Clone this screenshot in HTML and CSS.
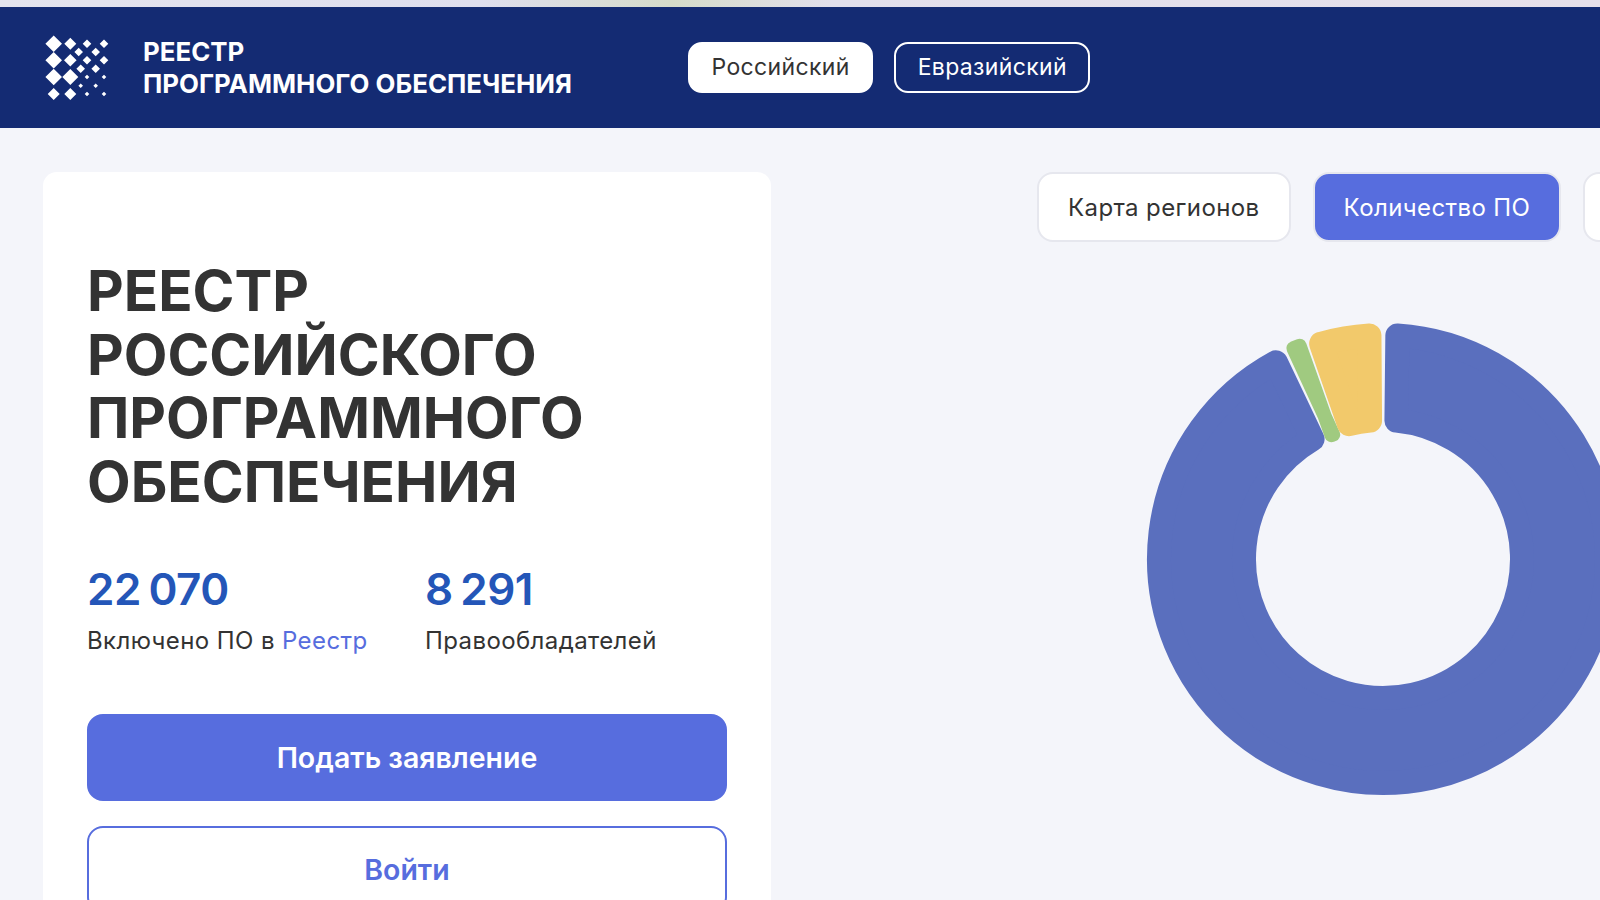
FILE: index.html
```html
<!DOCTYPE html>
<html lang="ru">
<head>
  <meta charset="UTF-8">
  <meta name="viewport" content="width=device-width, initial-scale=1">
  <title>Реестр программного обеспечения</title>
  <link rel="stylesheet" href="styles.css">
</head>
<body>
  <div class="top-strip"></div>
  <header class="site-header">
    <div class="brand">
      <svg class="brand-logo" width="72" height="66" viewBox="44 35 72 66" fill="#fff">
        <path d="M53.7 35.4l8.3 8.3-8.3 8.3-8.3-8.3zM53.7 52l8.3 8.3-8.3 8.3-8.3-8.3zM53.7 68.7l8.3 8.3-8.3 8.3-8.3-8.3zM53.7 88l6 6-6 6-6-6z"/>
        <path d="M70.3 37.7l6 6-6 6-6-6zM70.3 54l6.3 6.3-6.3 6.3-6.3-6.3zM70.3 69l8 8-8 8-8-8zM70.3 88l6 6-6 6-6-6z"/>
        <path d="M87 39.4l4.3 4.3-4.3 4.3-4.3-4.3zM104 39.4l4.3 4.3-4.3 4.3-4.3-4.3zM78.7 47.7l4.3 4.3-4.3 4.3-4.3-4.3zM95.7 47.7l4.3 4.3-4.3 4.3-4.3-4.3z"/>
        <path d="M87 56l4.3 4.3-4.3 4.3-4.3-4.3zM104 56l4.3 4.3-4.3 4.3-4.3-4.3zM80.7 64.4l4.3 4.3-4.3 4.3-4.3-4.3zM95.7 64.4l4.3 4.3-4.3 4.3-4.3-4.3z"/>
        <path d="M87 74.7l2.3 2.3-2.3 2.3-2.3-2.3zM104 74.7l2.3 2.3-2.3 2.3-2.3-2.3zM80.7 83.4l2.3 2.3-2.3 2.3-2.3-2.3zM95.7 83.4l2.3 2.3-2.3 2.3-2.3-2.3zM87 91.7l2.3 2.3-2.3 2.3-2.3-2.3zM104 91.7l2.3 2.3-2.3 2.3-2.3-2.3z"/>
      </svg>
      <div class="brand-name">РЕЕСТР<br>ПРОГРАММНОГО ОБЕСПЕЧЕНИЯ</div>
    </div>
    <nav class="registry-switch">
      <a class="pill pill-active">Российский</a>
      <a class="pill">Евразийский</a>
    </nav>
  </header>

  <main class="main-container">
    <section class="intro-card">
      <h1>РЕЕСТР РОССИЙСКОГО ПРОГРАММНОГО ОБЕСПЕЧЕНИЯ</h1>
      <div class="stats">
        <div class="stat stat-software">
          <div class="stat-number">22 070</div>
          <div class="stat-label">Включено ПО в <a>Реестр</a></div>
        </div>
        <div class="stat">
          <div class="stat-number">8 291</div>
          <div class="stat-label">Правообладателей</div>
        </div>
      </div>
      <button class="btn btn-primary">Подать заявление</button>
      <button class="btn btn-outline">Войти</button>
    </section>

    <section class="chart-section">
      <div class="chart-tabs">
        <button class="tab">Карта регионов</button>
        <button class="tab tab-active">Количество ПО</button>
        <button class="tab tab-extra"></button>
      </div>
      <svg class="donut" id="donut" width="474" height="474" viewBox="-237 -237 474 474"></svg>
    </section>
  </main>

  <script>
    // angles are degrees clockwise from 12 o'clock
    const slices = [
      { from: 0.6, to: 334.5, color: '#5a6fbe', corner: 12 },
      { from: 335.2, to: 340.4, color: '#a0ca80', corner: 7 },
      { from: 340.9, to: 359.6, color: '#f2c96b', corner: 12 }
    ];
    const outerR = 236;
    const innerR = 127;

    function point(r, deg) {
      const rad = deg * Math.PI / 180;
      return (r * Math.sin(rad)).toFixed(2) + ' ' + (-r * Math.cos(rad)).toFixed(2);
    }

    function slicePath(s) {
      const R = outerR - s.corner;
      const r = innerR + s.corner;
      const outerInset = s.corner / R * 180 / Math.PI;
      const innerInset = s.corner / r * 180 / Math.PI;
      const large = s.to - s.from > 180 ? 1 : 0;
      return 'M' + point(R, s.from + outerInset) +
        'A' + R + ' ' + R + ' 0 ' + large + ' 1 ' + point(R, s.to - outerInset) +
        'L' + point(r, s.to - innerInset) +
        'A' + r + ' ' + r + ' 0 ' + large + ' 0 ' + point(r, s.from + innerInset) + 'Z';
    }

    document.getElementById('donut').innerHTML = slices.map(function(s) {
      return '<path d="' + slicePath(s) + '" fill="' + s.color + '" stroke="' + s.color +
        '" stroke-width="' + s.corner * 2 + '" stroke-linejoin="round"/>';
    }).join('');
  </script>
</body>
</html>
```

FILE: styles.css
```css
* {
  box-sizing: border-box;
}
html, body {
  height: 100%;
}
body {
  margin: 0;
  overflow: hidden;
  background: #f4f5fa;
  color: #333;
  font-family: Inter, "Noto Sans", sans-serif;
}
.top-strip {
  height: 7px;
  background: linear-gradient(90deg, #e4e4ee 0%, #dfdfee 30%, #d6dcca 42%, #e2e0ec 52%, #e6e0ea 100%);
}
.site-header {
  display: flex;
  align-items: center;
  height: 121px;
  padding: 0 0 0 44px;
  background: #142b73;
  color: #fff;
}
.brand {
  display: flex;
  align-items: center;
  gap: 27px;
  width: 644px;
}
.brand-logo {
  flex: none;
}
.brand-name {
  font-size: 25.85px;
  font-weight: 700;
  line-height: 32px;
  white-space: nowrap;
}
.registry-switch {
  display: flex;
  gap: 21px;
}
.pill {
  height: 51px;
  padding: 0 21.5px;
  border: 2px solid #fff;
  border-radius: 14px;
  font-size: 23px;
  letter-spacing: 0.35px;
  line-height: 47px;
}
.pill-active {
  background: #fff;
  color: #333;
}
.main-container {
  display: flex;
  padding: 44px 0 0 43px;
}
.intro-card {
  flex: none;
  width: 728px;
  padding: 87px 44px 0;
  border-radius: 14px;
  background: #fff;
}
h1 {
  margin: 0 0 47px;
  font-size: 56.7px;
  font-weight: 700;
  line-height: 63.7px;
  letter-spacing: 0;
}
.stats {
  display: flex;
  margin-bottom: 57px;
}
.stat-software {
  width: 338px;
}
.stat-number {
  color: #2456b8;
  font-size: 44px;
  font-weight: 600;
  line-height: 56px;
  letter-spacing: -0.5px;
  word-spacing: -3px;
}
.stat-label {
  margin-top: 8px;
  font-size: 24px;
  letter-spacing: 0.4px;
  line-height: 32px;
}
.stat-label a {
  color: #576dde;
}
.btn {
  display: block;
  width: 100%;
  height: 87px;
  margin-bottom: 25px;
  border: 2px solid #576dde;
  border-radius: 16px;
  font-family: inherit;
  font-size: 28.5px;
  font-weight: 600;
}
.btn-primary {
  background: #576dde;
  color: #fff;
}
.btn-outline {
  background: #fff;
  color: #576dde;
}
.chart-section {
  flex: 1;
  min-width: 0;
  padding-left: 266px;
}
.chart-tabs {
  display: flex;
  align-items: center;
  gap: 22px;
  width: 700px;
}
.tab {
  flex: none;
  height: 70px;
  padding: 0 29px;
  border: 2px solid #e6e7ee;
  border-radius: 16px;
  background: #fff;
  color: #333;
  font-family: inherit;
  font-size: 24px;
  letter-spacing: 0.4px;
}
.tab-active {
  background: #576dde;
  color: #fff;
}
.tab-extra {
  width: 120px;
}
.donut {
  display: block;
  margin: 80px 0 0 109px;
  overflow: visible;
}
```
